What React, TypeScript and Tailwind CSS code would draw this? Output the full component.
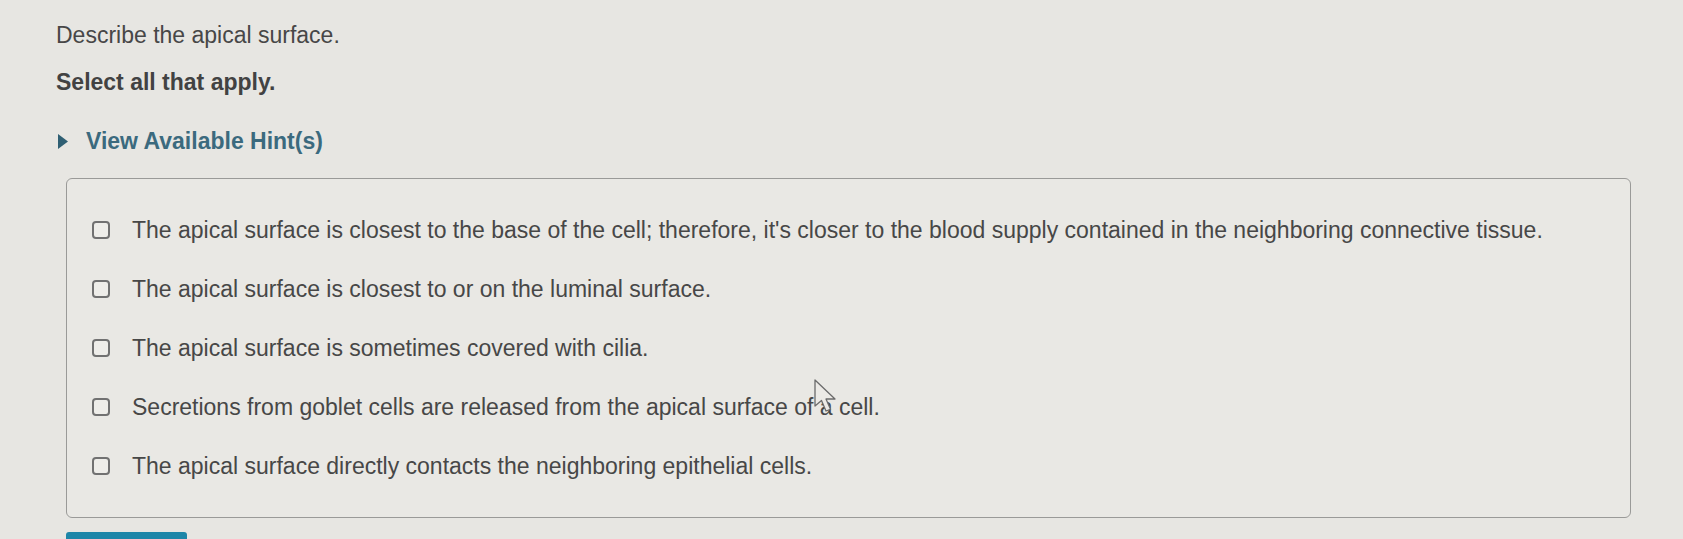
import React from "react";

const options = [
  "The apical surface is closest to the base of the cell; therefore, it's closer to the blood supply contained in the neighboring connective tissue.",
  "The apical surface is closest to or on the luminal surface.",
  "The apical surface is sometimes covered with cilia.",
  "Secretions from goblet cells are released from the apical surface of a cell.",
  "The apical surface directly contacts the neighboring epithelial cells.",
];

function Checkbox() {
  return <span className="block w-[18px] h-[18px] shrink-0 rounded-[4px] border-2 border-[#717171] bg-[#eeede9]" />;
}

export default function App() {
  return (
    <div
      className="relative min-h-screen overflow-hidden bg-[#e7e6e2] pl-[56px] pt-[21px] text-[#474747]"
      style={{ fontFamily: '"Liberation Sans", Arial, sans-serif' }}
    >
      <p className="text-[23px] leading-[28px]">Describe the apical surface.</p>
      <p className="mt-[19px] text-[23px] leading-[28px] font-bold text-[#424242]">Select all that apply.</p>

      <div className="mt-[31px] flex items-center h-[28px]">
        <svg width="10" height="15" viewBox="0 0 10 15" className="ml-[2px]">
          <path d="M0 0 L10 7.5 L0 15 Z" fill="#2f5f73" />
        </svg>
        <span className="ml-[18px] text-[23px] leading-[28px] font-bold text-[#3b6a7e]">View Available Hint(s)</span>
      </div>

      <div className="mt-[23px] ml-[10px] w-[1565px] h-[340px] rounded-[6px] border border-[#9a9a98] bg-[#e9e8e4] pl-[25px] pt-[37px]">
        <ul className="flex flex-col gap-[31px]">
          {options.map((o, i) => (
            <li key={i} className="flex items-center h-[28px]">
              <Checkbox />
              <span className="ml-[22px] text-[23px] leading-[28px] whitespace-nowrap">{o}</span>
            </li>
          ))}
        </ul>
      </div>

      <div className="mt-[14px] ml-[10px] w-[121px] h-[20px] rounded-t-[3px] bg-[#1d86a8]" />

      {/* mouse pointer caught in the shot */}
      <svg className="absolute left-[814px] top-[379px]" width="26" height="34" viewBox="0 0 26 34">
        <path d="M1 1 L1 27 L7.5 21.5 L12 32 L16.5 30.3 L12 20 L21 20 Z" fill="#eceae6" stroke="#6b6b6b" strokeWidth="1.3" strokeLinejoin="round" />
      </svg>
    </div>
  );
}
